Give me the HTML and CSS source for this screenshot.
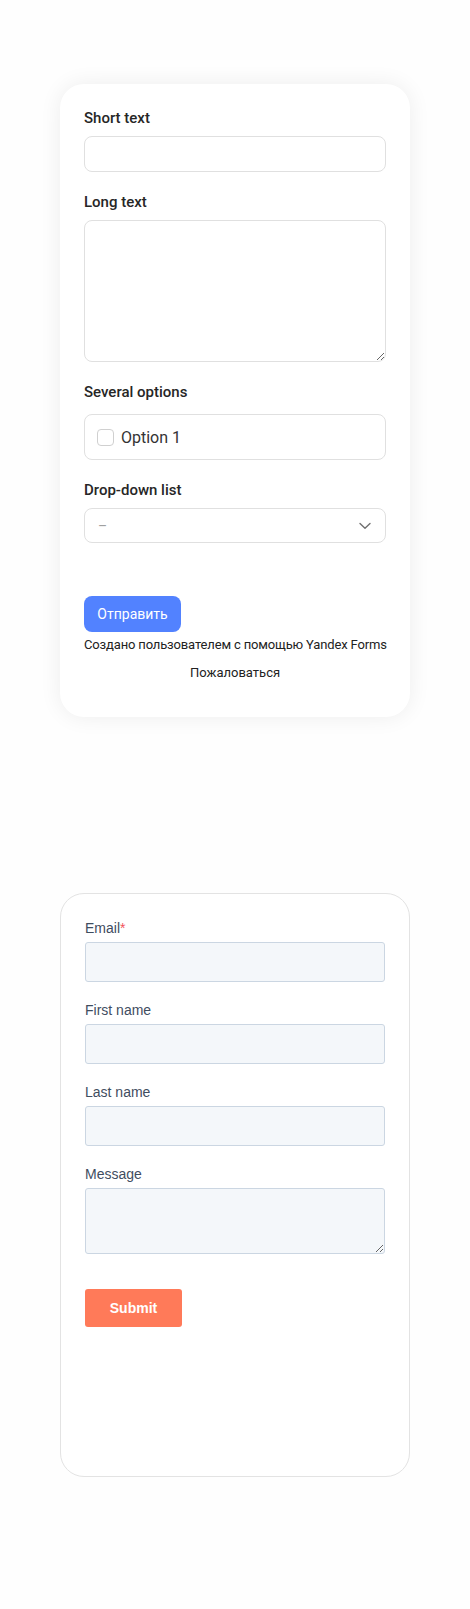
FILE: index.html
```html
<!DOCTYPE html>
<html lang="en">
<head>
<meta charset="utf-8">
<title>Forms</title>
<link rel="stylesheet" href="styles.css">
</head>
<body>
<main class="page">
  <section class="ya-card">
    <div class="ya-field">
      <label class="ya-label">Short text</label>
      <input class="ya-input" type="text">
    </div>
    <div class="ya-field">
      <label class="ya-label">Long text</label>
      <textarea class="ya-textarea"></textarea>
    </div>
    <div class="ya-field">
      <label class="ya-label">Several options</label>
      <div class="ya-options">
        <label class="ya-option"><span class="ya-check"></span><span>Option 1</span></label>
      </div>
    </div>
    <div class="ya-field">
      <label class="ya-label">Drop-down list</label>
      <div class="ya-select">
        <span class="ya-select-value">–</span>
        <svg class="ya-chevron" width="12" height="8" viewBox="0 0 12 8"><path d="M1 1.5 L6 6.2 L11 1.5" fill="none" stroke="#707070" stroke-width="1.4" stroke-linecap="round" stroke-linejoin="round"/></svg>
      </div>
    </div>
    <div class="ya-actions">
      <button class="ya-submit" type="button">Отправить</button>
    </div>
    <p class="ya-credit">Создано пользователем с помощью Yandex Forms</p>
    <p class="ya-report">Пожаловаться</p>
  </section>

  <section class="hs-card">
    <div class="hs-field">
      <label class="hs-label">Email<span class="hs-req">*</span></label>
      <input class="hs-input" type="email">
    </div>
    <div class="hs-field">
      <label class="hs-label">First name</label>
      <input class="hs-input" type="text">
    </div>
    <div class="hs-field">
      <label class="hs-label">Last name</label>
      <input class="hs-input" type="text">
    </div>
    <div class="hs-field">
      <label class="hs-label">Message</label>
      <textarea class="hs-textarea"></textarea>
    </div>
    <button class="hs-submit" type="button">Submit</button>
  </section>
</main>
</body>
</html>
```

FILE: styles.css
```css
* { box-sizing: border-box; }
html, body { margin: 0; padding: 0; background: #fefefe; }
.page {
  display: flex;
  flex-direction: column;
  align-items: center;
  padding: 84px 0 132px;
  gap: 176px;
}

/* Yandex-style card */
.ya-card {
  width: 350px;
  background: #fff;
  border-radius: 24px;
  box-shadow: 0 0 22px rgba(0, 0, 0, 0.07);
  padding: 24px 24px 35px;
  font-family: Roboto, "Noto Sans", sans-serif;
  color: #222;
  display: flex;
  flex-direction: column;
}
.ya-field { display: flex; flex-direction: column; margin-bottom: 20px; }
.ya-label {
  font-size: 15px;
  line-height: 20px;
  font-weight: 500;
  margin-bottom: 8px;
  color: #262626;
}
.ya-input {
  height: 36px;
  border: 1px solid #e0e0e0;
  border-radius: 8px;
  background: #fff;
  outline: none;
}
.ya-textarea {
  height: 142px;
  border: 1px solid #e0e0e0;
  border-radius: 8px;
  background: #fff;
  resize: vertical;
  outline: none;
}
.ya-options {
  margin-top: 4px;
  height: 46px;
  border: 1px solid #e0e0e0;
  border-radius: 8px;
  display: flex;
  align-items: center;
  padding: 0 12px;
}
.ya-option {
  display: flex;
  align-items: center;
  gap: 7px;
  font-size: 16px;
  color: #333;
}
.ya-check {
  width: 17px;
  height: 17px;
  border: 1px solid #d0d0d0;
  border-radius: 4px;
  background: #fff;
}
.ya-select {
  height: 35px;
  border: 1px solid #e0e0e0;
  border-radius: 8px;
  display: flex;
  align-items: center;
  justify-content: space-between;
  padding: 0 14px 0 13px;
}
.ya-select-value { color: #a0a0a0; font-size: 14px; }
.ya-chevron { display: block; }
.ya-actions { margin-top: 33px; }
.ya-submit {
  width: 97px;
  height: 36px;
  border: none;
  border-radius: 8px;
  background: #5282ff;
  color: #fff;
  font-family: inherit;
  font-size: 14px;
}
.ya-credit {
  margin: 4px 0 0;
  text-align: center;
  font-size: 13px;
  line-height: 18px;
  color: #222;
  white-space: nowrap;
  letter-spacing: -0.15px;
}
.ya-report {
  margin: 10px 0 0;
  text-align: center;
  font-size: 13px;
  line-height: 18px;
  color: #222;
}

/* second form card */
.hs-card {
  width: 350px;
  height: 584px;
  background: #fff;
  border: 1px solid #e3e3e3;
  border-radius: 24px;
  padding: 24px 24px;
  font-family: "Liberation Sans", Arial, sans-serif;
}
.hs-field { display: flex; flex-direction: column; margin-bottom: 18px; }
.hs-label {
  font-size: 14px;
  line-height: 20px;
  color: #3f4d5f;
  margin-bottom: 4px;
}
.hs-req { color: #f2545b; }
.hs-input {
  height: 40px;
  background: #f4f7fa;
  border: 1px solid #cbd6e2;
  border-radius: 3px;
  outline: none;
}
.hs-textarea {
  height: 66px;
  background: #f4f7fa;
  border: 1px solid #cbd6e2;
  border-radius: 3px;
  resize: vertical;
  outline: none;
}
.hs-submit {
  margin-top: 17px;
  width: 97px;
  height: 38px;
  border: none;
  border-radius: 3px;
  background: #ff7a59;
  color: #fff;
  font-family: inherit;
  font-weight: 700;
  font-size: 14px;
}
```
